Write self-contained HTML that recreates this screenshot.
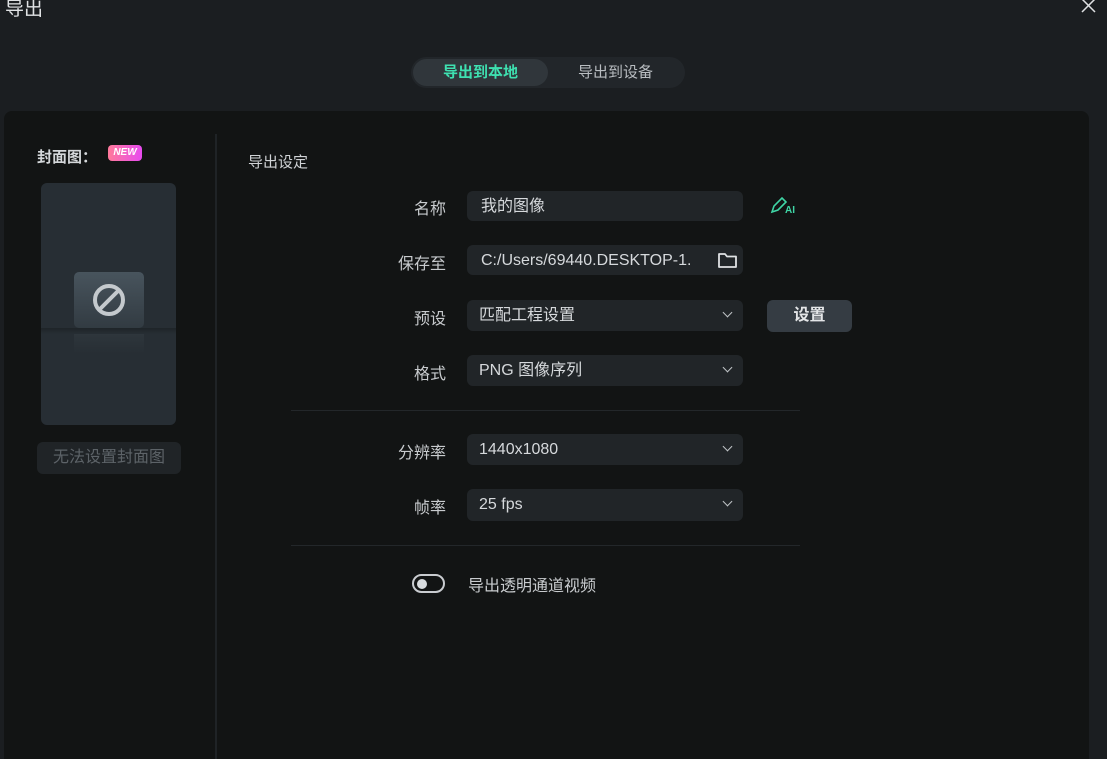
<!DOCTYPE html>
<html><head><meta charset="utf-8"><style>
*{box-sizing:border-box;margin:0;padding:0}
html,body{width:1107px;height:759px;overflow:hidden}
body{background:#1b1e21;font-family:"Liberation Sans","Noto Sans CJK SC",sans-serif;position:relative;color:#d4d7da}
.a{position:absolute}
.panel{left:4px;top:111px;width:1085px;height:660px;background:#121414;border-radius:8px}
.lbl{font-size:16px;color:#c8cbce;text-align:right;width:120px;left:326px}
.f{left:467px;width:276px;height:30px;background:#212528;border-radius:6px;font-size:16px;color:#d6d9dc;padding-left:12px;line-height:32px}
.chev{position:absolute;right:12px;top:9px;width:7px;height:7px;border-right:1.5px solid #bfc3c6;border-bottom:1.5px solid #bfc3c6;transform:rotate(45deg)}
.sep{left:291px;width:509px;height:1px;background:#23272a}
</style></head><body>
<div class="a" style="left:5px;top:-6px;font-size:19px;color:#e0e2e4">导出</div>
<svg class="a" style="left:1081px;top:0" width="16" height="14"><path d="M1 -1L14 12M14 -1L1 12" stroke="#dfe1e3" stroke-width="1.5"/></svg>
<div class="a" style="left:411px;top:57px;width:274px;height:31px;background:#22262a;border-radius:16px"></div>
<div class="a" style="left:413px;top:59px;width:135px;height:27px;background:#30363b;border-radius:14px;color:#3ee0b0;font-size:15px;font-weight:bold;text-align:center;line-height:27px">导出到本地</div>
<div class="a" style="left:548px;top:59px;width:135px;height:27px;color:#b9bdc1;font-size:15px;text-align:center;line-height:27px">导出到设备</div>
<div class="a panel"></div>
<div class="a" style="left:215px;top:134px;width:2px;height:630px;background:#1f2326"></div>
<div class="a" style="left:37px;top:146px;font-size:15px;font-weight:bold;color:#d4d7da">封面图：</div>
<div class="a" style="left:108px;top:145px;width:34px;height:16px;border-radius:4px;background:linear-gradient(90deg,#ff7a9a,#e84af0);font-size:10px;font-style:italic;font-weight:bold;color:#fff;text-align:center;line-height:16px">NEW</div>
<div class="a" style="left:41px;top:183px;width:135px;height:242px;background:#272e34;border-radius:6px;overflow:hidden">
 <div class="a" style="left:33px;top:89px;width:70px;height:56px;border-radius:5px;background:linear-gradient(#48545d,#323b42)"></div>
 <svg class="a" style="left:51px;top:100px" width="34" height="34"><circle cx="17" cy="17" r="14" fill="none" stroke="#c4c9cd" stroke-width="4"/><path d="M8 26L26 8" stroke="#c4c9cd" stroke-width="4"/></svg>
 <div class="a" style="left:0;top:145px;width:135px;height:6px;background:linear-gradient(#1e2428,#272e34)"></div>
 <div class="a" style="left:33px;top:151px;width:70px;height:20px;background:linear-gradient(#2e363c,#272e34)"></div>
</div>
<div class="a" style="left:37px;top:442px;width:144px;height:32px;background:#202427;border-radius:6px;color:#5d6368;font-size:16px;text-align:center;line-height:32px">无法设置封面图</div>
<div class="a" style="left:248px;top:151px;font-size:15px;color:#d0d3d6">导出设定</div>
<div class="a lbl" style="top:195px">名称</div>
<div class="a f" style="top:191px;padding-left:14px">我的图像</div>
<svg class="a" style="left:770px;top:195px" width="28" height="20"><path d="M2 17L4 11L12 3L16 7L8 15Z" fill="none" stroke="#3fd6a6" stroke-width="1.6"/><text x="15" y="18" font-size="10" font-weight="bold" fill="#3fd6a6" font-family="Liberation Sans">AI</text></svg>
<div class="a lbl" style="top:250px">保存至</div>
<div class="a f" style="top:245px;padding-left:14px">C:/Users/69440.DESKTOP-1.</div>
<svg class="a" style="left:717px;top:251px" width="22" height="18"><path d="M2 3H8L10 5.5H19V16H2Z" fill="none" stroke="#dfe2e4" stroke-width="1.8" stroke-linejoin="round"/></svg>
<div class="a lbl" style="top:305px">预设</div>
<div class="a f" style="top:300px;height:31px">匹配工程设置<span class="chev"></span></div>
<div class="a" style="left:767px;top:300px;width:85px;height:32px;background:#353c43;border-radius:6px;font-size:16px;font-weight:bold;color:#e3e5e7;text-align:center;line-height:32px">设置</div>
<div class="a lbl" style="top:360px">格式</div>
<div class="a f" style="top:355px;height:31px">PNG 图像序列<span class="chev"></span></div>
<div class="a sep" style="top:410px"></div>
<div class="a lbl" style="top:439px">分辨率</div>
<div class="a f" style="top:434px;height:31px">1440x1080<span class="chev"></span></div>
<div class="a lbl" style="top:494px">帧率</div>
<div class="a f" style="top:489px;height:32px">25 fps<span class="chev"></span></div>
<div class="a sep" style="top:545px"></div>
<div class="a" style="left:412px;top:574px;width:33px;height:19px;border:2px solid #c9ccd0;border-radius:10px"><div class="a" style="left:3px;top:2.5px;width:10px;height:10px;border-radius:50%;background:#d9dcdf"></div></div>
<div class="a" style="left:468px;top:572px;font-size:16px;color:#c8cbce">导出透明通道视频</div>
</body></html>
